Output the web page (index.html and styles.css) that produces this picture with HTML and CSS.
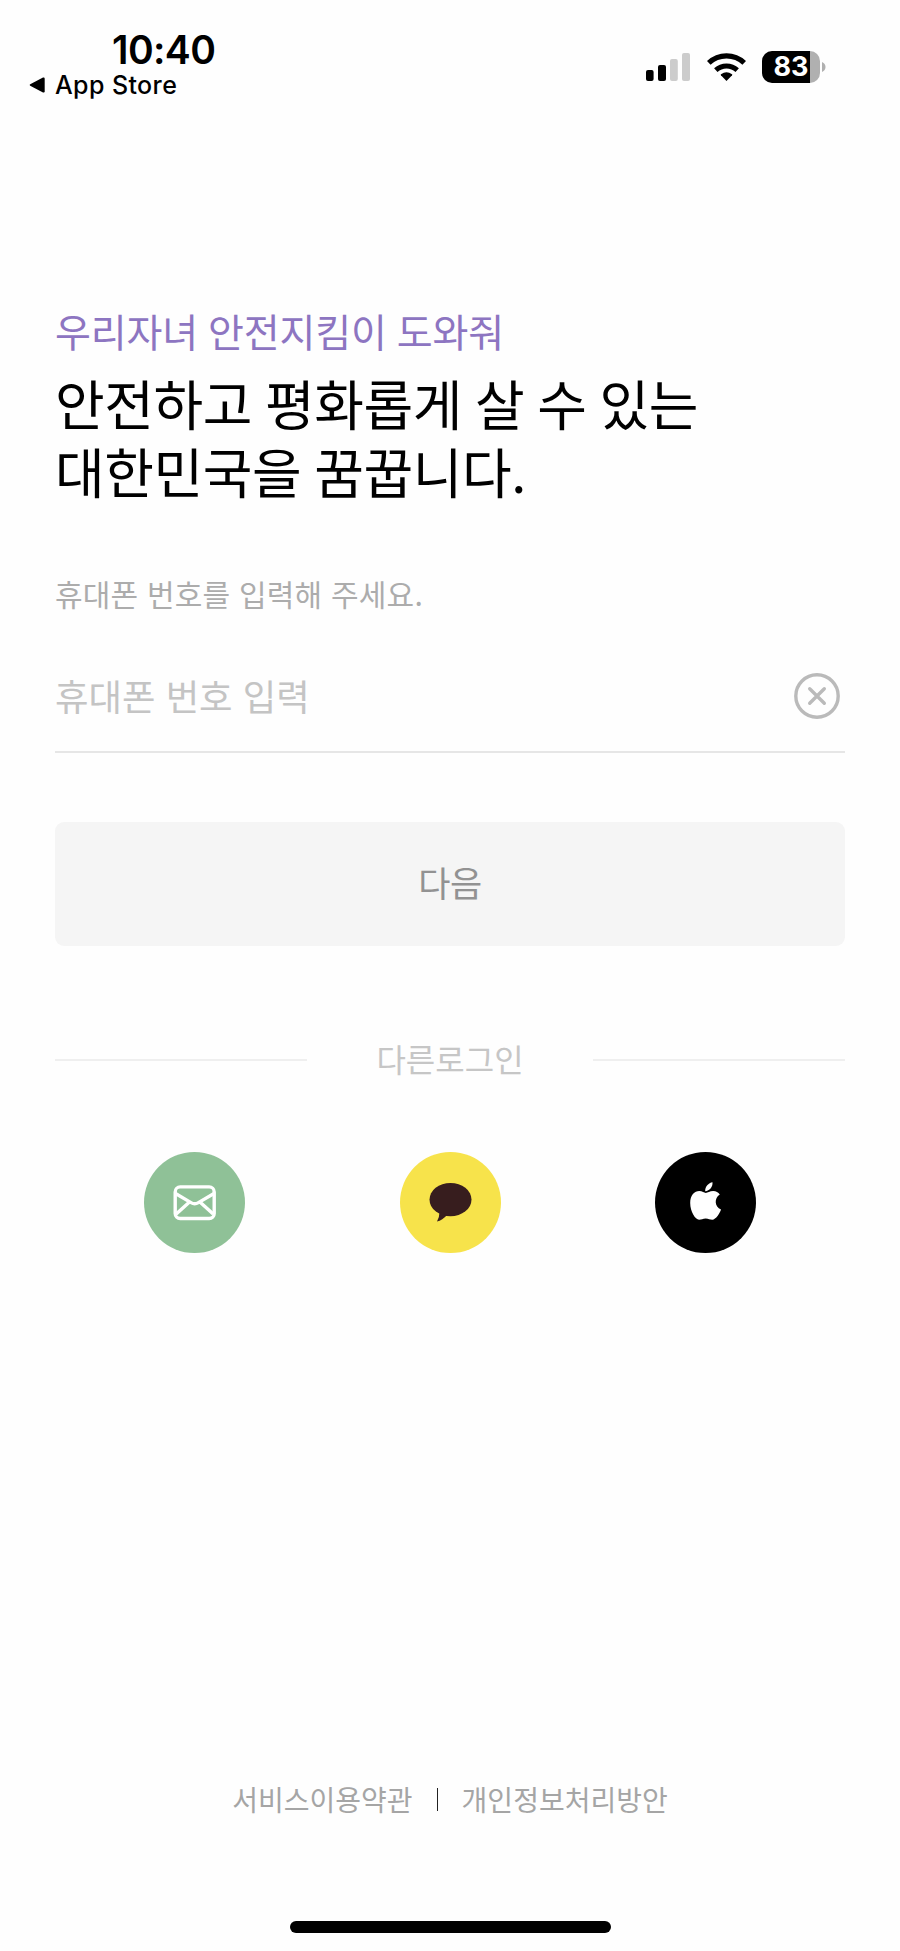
FILE: index.html
```html
<!DOCTYPE html>
<html lang="ko">
<head>
    <meta charset="UTF-8">
    <meta name="viewport" content="width=device-width, initial-scale=1.0">
    <title>로그인</title>
    <link rel="stylesheet" href="styles.css">
</head>
<body>

<header class="status-bar">
    <div class="status-left">
        <div class="time">10:40</div>
        <div class="back-app">
            <svg width="16" height="16" viewBox="0 0 16 16"><path d="M1.2 7.2 14 .6Q15.7 0 15.7 1.8V14.2Q15.7 16 14 15.4L1.2 8.8Q0 8 1.2 7.2Z"/></svg>
            <span>App Store</span>
        </div>
    </div>
    <div class="status-right">
        <svg class="signal" width="44" height="28" viewBox="0 0 44 28">
            <rect x="0" y="17" width="7.6" height="11" rx="2"/>
            <rect x="12" y="12" width="8" height="16" rx="2"/>
            <rect x="24" y="6" width="7.8" height="22" rx="2" fill="#ccc"/>
            <rect x="36" y="0" width="8" height="28" rx="2" fill="#ccc"/>
        </svg>
        <svg class="wifi" width="39" height="28" viewBox="0 0 39 28">
            <path d="M19.5 28 13.9 22.3Q13.4 21.7 14 21.2Q19.5 17.2 25 21.2Q25.6 21.7 25.1 22.3Z"/>
            <path d="M8.8 17.2A15.7 15.7 0 0 1 30.2 17.2" fill="none" stroke="#000" stroke-width="5"/>
            <path d="M1.8 9.9A25.6 25.6 0 0 1 37.2 9.9" fill="none" stroke="#000" stroke-width="5.2"/>
        </svg>
        <div class="battery">
            <span class="battery-level">83</span>
        </div>
        <svg class="battery-cap" width="4" height="10" viewBox="0 0 4 10"><path d="M0 0Q3.5 1.6 3.5 5T0 10Z" fill="#b0b0b0"/></svg>
    </div>
</header>

<main class="container">
    <p class="sub-title">우리자녀 안전지킴이 도와줘</p>
    <h1>안전하고 평화롭게 살 수 있는<br>대한민국을 꿈꿉니다.</h1>

    <form id="loginForm">
        <label class="guide" for="mobile">휴대폰 번호를 입력해 주세요.</label>
        <div class="input-row">
            <input type="text" id="mobile" placeholder="휴대폰 번호 입력">
            <button type="reset" class="clear-button" aria-label="지우기">
                <svg width="46" height="46" viewBox="0 0 46 46" fill="none" stroke="#bababa" stroke-width="3.4" stroke-linecap="round">
                    <circle cx="23" cy="23" r="21.2"/>
                    <path d="M15.7 15.7 30.3 30.3M30.3 15.7 15.7 30.3"/>
                </svg>
            </button>
        </div>
        <button type="button" class="next-button">다음</button>
    </form>

    <div class="divider"><span>다른로그인</span></div>

    <div class="social">
        <a class="social-button mail" aria-label="이메일">
            <svg width="101" height="101" viewBox="0 0 101 101" fill="none" stroke="#fff" stroke-width="3.4">
                <rect x="31.2" y="34.9" width="39" height="31.6" rx="5"/>
                <path d="M31.5 41.5 47 50.6Q50.7 52.8 54.4 50.6L70 41.5M32.2 62 45.2 50.2M69.2 62 56.2 50.2"/>
            </svg>
        </a>
        <a class="social-button kakao" aria-label="카카오톡">
            <svg width="101" height="101" viewBox="0 0 101 101" fill="#371d1e">
                <ellipse cx="50.5" cy="47.6" rx="21" ry="16.6"/>
                <path d="M39.5 60Q39.5 65 37 69.6Q42.5 68.2 47 63Z"/>
            </svg>
        </a>
        <a class="social-button apple" aria-label="Apple">
            <svg width="101" height="101" viewBox="0 0 101 101" fill="#fff">
                <path d="M57.5 30.2C57.9 35 54.4 38.8 50.2 39.2C49.8 34.7 53.6 30.8 57.5 30.2Z"/>
                <path d="M50.8 40.9C52.6 40.9 54.7 39.1 58.3 39.1C61 39.1 63.3 40.5 64.8 42.6C59 46.3 59.4 54.8 66 57.5C65 61 60.8 67.7 57.3 67.7C54.9 67.7 53.6 66.4 50.7 66.4C47.8 66.4 46.4 67.7 44.1 67.7C40.3 67.7 35.2 59.5 35.2 51C35.2 43.4 39.5 39.1 44.3 39.1C47.2 39.1 49.2 40.9 50.8 40.9Z"/>
            </svg>
        </a>
    </div>
</main>

<footer>
    <nav class="terms">
        <a>서비스이용약관</a>
        <span class="bar"></span>
        <a>개인정보처리방안</a>
    </nav>
    <div class="home-indicator"></div>
</footer>

</body>
</html>
```

FILE: styles.css
```css
* {
    box-sizing: border-box;
}
body {
    font-family: "Noto Sans CJK KR", sans-serif;
    margin: 0;
    min-height: 1951px;
    background-color: #fefefe;
    color: #000;
    display: flex;
    flex-direction: column;
}
.status-bar {
    height: 301px;
    padding: 30px 74px 0 29px;
    display: flex;
    justify-content: space-between;
    font-family: Inter, sans-serif;
}
.time {
    padding-left: 83px;
    font-size: 39px;
    font-weight: 600;
    line-height: 40px;
    letter-spacing: -0.6px;
}
.back-app {
    display: flex;
    align-items: center;
    gap: 10px;
    font-size: 25px;
    font-weight: 500;
    line-height: 30px;
    letter-spacing: 0.4px;
}
.status-right {
    display: flex;
    align-items: center;
    height: 32px;
    margin-top: 21px;
}
.wifi {
    margin-left: 17px;
}
.battery {
    width: 58px;
    height: 32px;
    margin: 0 2px 0 16px;
    border-radius: 10px;
    background: linear-gradient(to right, #000 48px, #b0b0b0 48px);
    color: #fff;
    text-align: center;
}
.battery-level {
    font-size: 27px;
    font-weight: 700;
    line-height: 32px;
}
.container {
    padding: 0 55px;
}
.sub-title {
    margin: 0;
    font-size: 39px;
    line-height: 58px;
    letter-spacing: -0.1px;
    word-spacing: -1px;
    color: #8d75c1;
}
h1 {
    margin: 10px 0 0;
    font-size: 54px;
    font-weight: 400;
    line-height: 68px;
    letter-spacing: -0.45px;
    word-spacing: -1.6px;
}
.guide {
    display: block;
    margin-top: 68px;
    font-size: 30px;
    line-height: 40px;
    letter-spacing: 0.2px;
    color: #acacac;
}
.input-row {
    display: flex;
    align-items: center;
    height: 114px;
    margin-top: 26px;
    padding-right: 5px;
    border-bottom: 2px solid #e6e6e6;
}
input {
    flex: 1;
    padding: 0;
    border: none;
    outline: none;
    background: none;
    font-family: inherit;
    font-size: 36.4px;
}
input::placeholder {
    color: #c4c4c4;
}
.clear-button {
    display: flex;
    margin-top: 2px;
    padding: 0;
    border: none;
    background: none;
}
.next-button {
    width: 100%;
    height: 124px;
    margin-top: 69px;
    padding: 0 0 5px;
    border: none;
    border-radius: 9px;
    background-color: #f5f5f5;
    color: #929292;
    font-family: inherit;
    font-size: 35px;
    letter-spacing: -0.5px;
}
.divider {
    display: flex;
    align-items: center;
    justify-content: space-between;
    margin-top: 90px;
    font-size: 32px;
    line-height: 48px;
    color: #c6c6c6;
}
.divider span {
    margin: -2px 0 2px;
}
.divider::before,
.divider::after {
    content: "";
    width: 252px;
    height: 2px;
    background-color: #efefef;
}
.social {
    display: flex;
    justify-content: space-between;
    margin-top: 68px;
    padding: 0 89px;
}
.social-button {
    width: 101px;
    height: 101px;
    border-radius: 50%;
}
.mail {
    background-color: #8fc197;
}
.kakao {
    background-color: #f7e34b;
}
.apple {
    background-color: #000;
}
footer {
    margin-top: auto;
    padding-bottom: 18px;
}
.terms {
    display: flex;
    justify-content: center;
    align-items: center;
    gap: 24px;
    font-size: 28px;
    line-height: 40px;
    color: #a5a5a5;
}
.bar {
    width: 1px;
    height: 23px;
    background-color: #222;
}
.home-indicator {
    width: 321px;
    height: 12px;
    margin: 102px auto 0;
    border-radius: 6px;
    background-color: #000;
}
```
